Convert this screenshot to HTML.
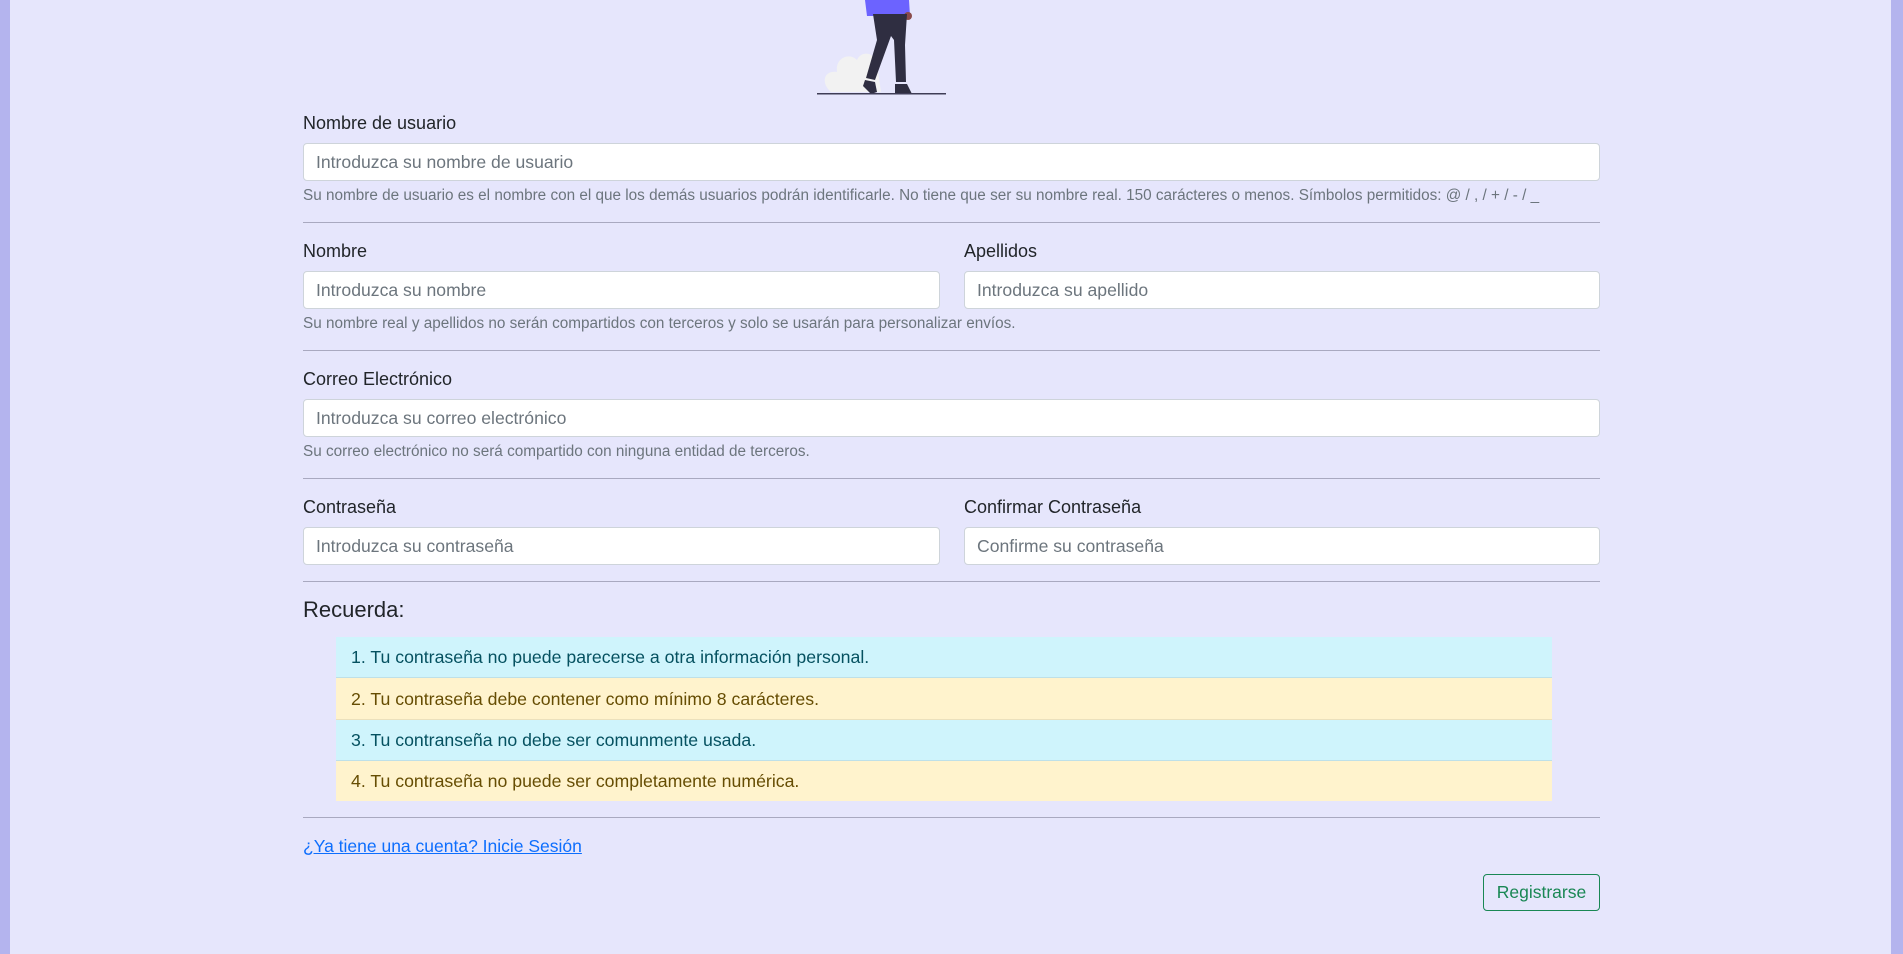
<!DOCTYPE html>
<html><head><meta charset="utf-8"><style>
*{box-sizing:border-box;margin:0;padding:0}
html,body{width:1903px;height:954px;overflow:hidden}
body{background:#e6e6fc;font-family:"Liberation Sans",sans-serif;color:#212529;position:relative}
.lb{position:absolute;top:0;bottom:0;left:0;width:10px;background:#b4b4ee}
.rb{position:absolute;top:0;bottom:0;right:0;width:12px;background:#b4b4ee}
.a{position:absolute}
.lab{font-size:18px;color:#212529}
.inp{position:absolute;height:38px;background:#fff;border:1px solid #ced4da;border-radius:4px;font-size:17.6px;color:#6c757d;padding:0 12px;line-height:36px}
.help{font-size:15.3px;color:#6c757d}
.hr{position:absolute;left:303px;width:1297px;height:1px;background:#a9a9c0}
.li{position:absolute;left:336px;width:1216px;font-size:17.7px;padding-left:15px;border-bottom:1px solid rgba(0,0,0,.08)}
.i{background:#cff4fc;color:#055160}
.w{background:#fff3cd;color:#664d03}
</style></head><body>
<div class="lb"></div><div class="rb"></div>
<svg class="a" style="left:809px;top:0" width="150" height="96" viewBox="0 0 150 96">
<path d="M22 92 C12 84 14 70 28 72 C26 58 40 52 48 60 C52 50 66 52 68 64 L72 92Z" fill="#f2f2f2"/>
<path d="M56 0 L100 0 L101 16 L58 16Z" fill="#6c63ff"/>
<circle cx="99" cy="16" r="4" fill="#8a4b4b"/>
<path d="M64 14 L98 14 L96 45 L97 82 L87 82 L85 40 L82 36 L66 80 L57 78 L68 40Z" fill="#2f2e41"/>
<path d="M56 80 L66 82 L68 92 L62 94 L54 86Z" fill="#2f2e41"/>
<path d="M86 84 L98 84 L103 94 L86 94Z" fill="#2f2e41"/>
<rect x="8" y="93" width="129" height="1.5" fill="#3f3d56"/>
</svg>

<div class="a lab" style="left:303px;top:113px">Nombre de usuario</div>
<div class="inp" style="left:303px;top:143px;width:1297px">Introduzca su nombre de usuario</div>
<div class="a help" style="left:303px;top:187px">Su nombre de usuario es el nombre con el que los demás usuarios podrán identificarle. No tiene que ser su nombre real. 150 carácteres o menos. Símbolos permitidos: @ / , / + / - / _</div>
<div class="hr" style="top:222px"></div>

<div class="a lab" style="left:303px;top:241px">Nombre</div>
<div class="a lab" style="left:964px;top:241px">Apellidos</div>
<div class="inp" style="left:303px;top:271px;width:637px">Introduzca su nombre</div>
<div class="inp" style="left:964px;top:271px;width:636px">Introduzca su apellido</div>
<div class="a help" style="left:303px;top:315px">Su nombre real y apellidos no serán compartidos con terceros y solo se usarán para personalizar envíos.</div>
<div class="hr" style="top:350px"></div>

<div class="a lab" style="left:303px;top:369px">Correo Electrónico</div>
<div class="inp" style="left:303px;top:399px;width:1297px">Introduzca su correo electrónico</div>
<div class="a help" style="left:303px;top:443px">Su correo electrónico no será compartido con ninguna entidad de terceros.</div>
<div class="hr" style="top:478px"></div>

<div class="a lab" style="left:303px;top:497px">Contraseña</div>
<div class="a lab" style="left:964px;top:497px">Confirmar Contraseña</div>
<div class="inp" style="left:303px;top:527px;width:637px">Introduzca su contraseña</div>
<div class="inp" style="left:964px;top:527px;width:636px">Confirme su contraseña</div>
<div class="hr" style="top:581px"></div>

<div class="a" style="left:303px;top:597px;font-size:22px">Recuerda:</div>
<div class="li i" style="top:637px;height:41px;line-height:41px">1. Tu contraseña no puede parecerse a otra información personal.</div>
<div class="li w" style="top:678px;height:42px;line-height:42px">2. Tu contraseña debe contener como mínimo 8 carácteres.</div>
<div class="li i" style="top:720px;height:41px;line-height:41px">3. Tu contranseña no debe ser comunmente usada.</div>
<div class="li w" style="top:761px;height:40px;line-height:40px;border:0">4. Tu contraseña no puede ser completamente numérica.</div>
<div class="hr" style="top:817px"></div>

<div class="a" style="left:303px;top:836px;font-size:17.5px;color:#0d6efd;text-decoration:underline">¿Ya tiene una cuenta? Inicie Sesión</div>
<div class="a" style="left:1483px;top:874px;width:117px;height:37px;border:1px solid #198754;border-radius:4px;color:#198754;font-size:17.5px;text-align:center;line-height:35px">Registrarse</div>
</body></html>
